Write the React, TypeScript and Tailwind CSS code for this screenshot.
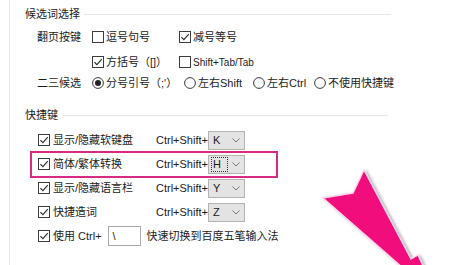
import React from "react";

const font = "font-['Liberation_Sans','Noto_Sans_CJK_SC',sans-serif]";

function CheckBox({ checked = false }: { checked?: boolean }) {
  return (
    <svg width="12" height="12" viewBox="0 0 12 12" className="shrink-0">
      <rect x="0.5" y="0.5" width="11" height="11" fill="#fff" stroke="#3c3c3c" />
      {checked && <path d="M2.4 6.2 L4.9 8.7 L9.8 3.2" fill="none" stroke="#2a2a2a" strokeWidth="1.1" />}
    </svg>
  );
}

function Radio({ checked = false }: { checked?: boolean }) {
  return (
    <svg width="12" height="12" viewBox="0 0 12 12" className="shrink-0">
      <circle cx="6" cy="6" r="5.4" fill="#fff" stroke="#3c3c3c" />
      {checked && <circle cx="6" cy="6" r="3" fill="#222" />}
    </svg>
  );
}

function Combo({ k, focus = false }: { k: string; focus?: boolean }) {
  return (
    <div className="w-[37px] h-[19px] bg-[#e3e3e3] border border-[#b4b4b4] flex items-center justify-between pl-[2px] pr-[4px]">
      <span className={`text-[11px] leading-[13px] px-[1px] ${focus ? "border border-dotted border-[#333]" : "border border-transparent"}`}>
        {k}
        {focus && <span className="inline-block w-[5px]" />}
      </span>
      <svg width="8" height="5" viewBox="0 0 8 5">
        <path d="M0.5 0.5 L4 4 L7.5 0.5" fill="none" stroke="#7a7a7a" />
      </svg>
    </div>
  );
}

function Header({ label, w }: { label: string; w: string }) {
  return (
    <div className="flex items-center pl-[15px] w-[381px] h-[18px]">
      <span className={`text-[11px] text-[#222] ${w}`}>{label}</span>
      <div className="flex-1 h-px bg-[#e6e6e6] ml-[4px]" />
    </div>
  );
}

const shortcuts = [
  { label: "显示/隐藏软键盘", key: "K" },
  { label: "简体/繁体转换", key: "H", focus: true },
  { label: "显示/隐藏语言栏", key: "Y" },
  { label: "快捷造词", key: "Z" },
];

export default function App() {
  return (
    <div className={`relative w-[456px] h-[265px] bg-white overflow-hidden text-[#1c1c1c] ${font}`}>
      <div className="flex h-full">
        <div className="w-[9px]" />
        <div className="w-px bg-[#e4e4e4]" />
        <div className="flex-1 flex flex-col text-[11px]">
          {/* 候选词选择 */}
          <div className="mt-[5px]">
            <Header label="候选词选择" w="" />
          </div>
          <div className="flex items-center h-[18px] mt-[5px] pl-[27px]">
            <span className="w-[55px]">翻页按键</span>
            <div className="w-[87px] flex items-center">
              <CheckBox />
              <span className="ml-[2px]">逗号句号</span>
            </div>
            <div className="flex items-center">
              <CheckBox checked />
              <span className="ml-[2px]">减号等号</span>
            </div>
          </div>
          <div className="flex items-center h-[18px] mt-[7px] pl-[82px]">
            <div className="w-[87px] flex items-center">
              <CheckBox checked />
              <span className="ml-[2px]">方括号（[]）</span>
            </div>
            <div className="flex items-center">
              <CheckBox />
              <span className="ml-[2px] text-[10px]">Shift+Tab/Tab</span>
            </div>
          </div>
          <div className="flex items-center h-[18px] mt-[3px] pl-[27px]">
            <span className="w-[55px]">二三候选</span>
            <div className="w-[92px] flex items-center">
              <Radio checked />
              <span className="ml-[2px]">分号引号（;'）</span>
            </div>
            <div className="w-[69px] flex items-center">
              <Radio />
              <span className="ml-[2px]">左右Shift</span>
            </div>
            <div className="w-[61px] flex items-center">
              <Radio />
              <span className="ml-[2px]">左右Ctrl</span>
            </div>
            <div className="flex items-center">
              <Radio />
              <span className="ml-[2px]">不使用快捷键</span>
            </div>
          </div>

          {/* 快捷键 */}
          <div className="mt-[14px] w-[378px]">
            <div className="flex items-center pl-[15px] h-[18px]">
              <span className="text-[11px] text-[#222]">快捷键</span>
              <div className="flex-1 h-px bg-[#e6e6e6] ml-[5px]" />
            </div>
          </div>
          <div className="mt-[4px] flex flex-col">
            {shortcuts.map((s) => (
              <div key={s.key} className="flex items-center h-[24px] pl-[28px]">
                <div className="w-[118px] flex items-center">
                  <CheckBox checked />
                  <span className="ml-[3px]">{s.label}</span>
                </div>
                <span className="w-[52px]">Ctrl+Shift+</span>
                <Combo k={s.key} focus={s.focus} />
              </div>
            ))}
            <div className="flex items-center h-[24px] pl-[28px]">
              <CheckBox checked />
              <span className="ml-[3px]">使用 Ctrl+</span>
              <div className="ml-[6px] w-[33px] h-[20px] border border-[#ababab] bg-white flex items-center pl-[4px]">
                <span>\</span>
              </div>
              <span className="ml-[6px]">快速切换到百度五笔输入法</span>
            </div>
          </div>
        </div>
      </div>

      {/* 高亮框 */}
      <div className="absolute left-[30px] top-[151px] w-[248px] h-[27px] border-2 border-[#d62a85]" />

      {/* 箭头 */}
      <svg className="absolute left-0 top-0" width="456" height="265" viewBox="0 0 456 265">
        <defs>
          <filter id="sh" x="-20%" y="-20%" width="140%" height="140%">
            <feDropShadow dx="2" dy="1" stdDeviation="1.6" floodColor="#000" floodOpacity="0.35" />
          </filter>
        </defs>
        <polygon
          points="364,170 353,193 323,198 403,268 424,268 418,255 411,259"
          fill="#f2077d"
          stroke="#ffd3e8"
          strokeWidth="1.4"
          strokeLinejoin="miter"
          filter="url(#sh)"
        />
      </svg>
    </div>
  );
}
